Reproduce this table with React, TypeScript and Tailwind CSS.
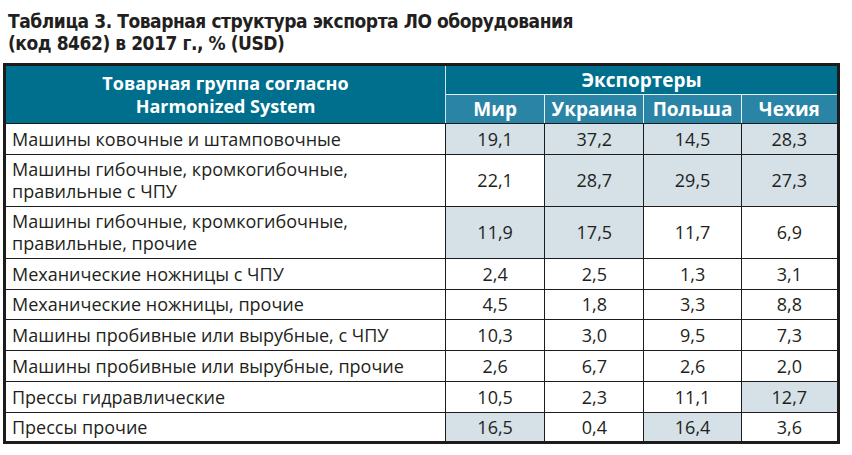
import React from "react";

const rows: { label: string[]; values: string[]; shaded: boolean[] }[] = [
  { label: ["Машины ковочные и штамповочные"], values: ["19,1", "37,2", "14,5", "28,3"], shaded: [true, true, true, true] },
  { label: ["Машины гибочные, кромкогибочные,", "правильные с ЧПУ"], values: ["22,1", "28,7", "29,5", "27,3"], shaded: [false, true, true, true] },
  { label: ["Машины гибочные, кромкогибочные,", "правильные, прочие"], values: ["11,9", "17,5", "11,7", "6,9"], shaded: [true, true, false, false] },
  { label: ["Механические ножницы с ЧПУ"], values: ["2,4", "2,5", "1,3", "3,1"], shaded: [false, false, false, false] },
  { label: ["Механические ножницы, прочие"], values: ["4,5", "1,8", "3,3", "8,8"], shaded: [false, false, false, false] },
  { label: ["Машины пробивные или вырубные, с ЧПУ"], values: ["10,3", "3,0", "9,5", "7,3"], shaded: [false, false, false, false] },
  { label: ["Машины пробивные или вырубные, прочие"], values: ["2,6", "6,7", "2,6", "2,0"], shaded: [false, false, false, false] },
  { label: ["Прессы гидравлические"], values: ["10,5", "2,3", "11,1", "12,7"], shaded: [false, false, false, true] },
  { label: ["Прессы прочие"], values: ["16,5", "0,4", "16,4", "3,6"], shaded: [true, false, true, false] },
];

const countries = ["Мир", "Украина", "Польша", "Чехия"];

export default function App() {
  return (
    <div className="w-[852px] h-[455px] bg-white overflow-hidden font-['Open_Sans',sans-serif] text-[#231f20]">
      <div className="pl-[8px] pt-[10px] font-['DejaVu_Sans_Condensed','DejaVu_Sans',sans-serif] font-bold text-[19px] leading-[22px] tracking-[-0.45px] text-[#231f20]">
        <div>Таблица 3. Товарная структура экспорта ЛО оборудования</div>
        <div>(код 8462) в 2017 г., % (USD)</div>
      </div>

      <table className="ml-[3px] mt-[9px] w-[837px] table-fixed border-collapse border-[3px] border-[#1c1c1c]">
        <colgroup>
          <col className="w-[440px]" />
          <col className="w-[99px]" />
          <col className="w-[99px]" />
          <col className="w-[97px]" />
          <col className="w-[97px]" />
        </colgroup>
        <thead>
          <tr className="h-[30px]">
            <th
              rowSpan={2}
              className="bg-[#006f8e] text-white font-bold text-[18px] leading-[23px] text-center align-middle border-r border-r-[#cfe3ea] border-b border-b-[#1c1c1c] pt-[1px]"
            >
              <div>Товарная группа согласно</div>
              <div>Harmonized System</div>
            </th>
            <th
              colSpan={4}
              className="bg-[#006f8e] text-white font-bold text-[19px] leading-[22px] text-center border-b border-b-[#e6f0f4]"
            >
              Экспортеры
            </th>
          </tr>
          <tr className="h-[29px]">
            {countries.map((c, i) => (
              <th
                key={c}
                className={`bg-[#2a84a6] text-white font-bold text-[19px] leading-[22px] text-center border-b border-b-[#1c1c1c] ${
                  i < 3 ? "border-r border-r-[#e6f0f4]" : ""
                }`}
              >
                {c}
              </th>
            ))}
          </tr>
        </thead>
        <tbody>
          {rows.map((r, ri) => (
            <tr key={ri} className={r.label.length > 1 ? "h-[52px]" : "h-[30.75px]"}>
              <td className="border border-[#1c1c1c] pl-[6px] text-[18px] leading-[22px] align-middle">
                {r.label.map((l, li) => (
                  <div key={li}>{l}</div>
                ))}
              </td>
              {r.values.map((v, vi) => (
                <td
                  key={vi}
                  className={`border border-[#1c1c1c] text-center text-[18px] leading-[22px] ${
                    r.shaded[vi] ? "bg-[#d5e0e7]" : "bg-white"
                  }`}
                >
                  {v}
                </td>
              ))}
            </tr>
          ))}
        </tbody>
      </table>
    </div>
  );
}
